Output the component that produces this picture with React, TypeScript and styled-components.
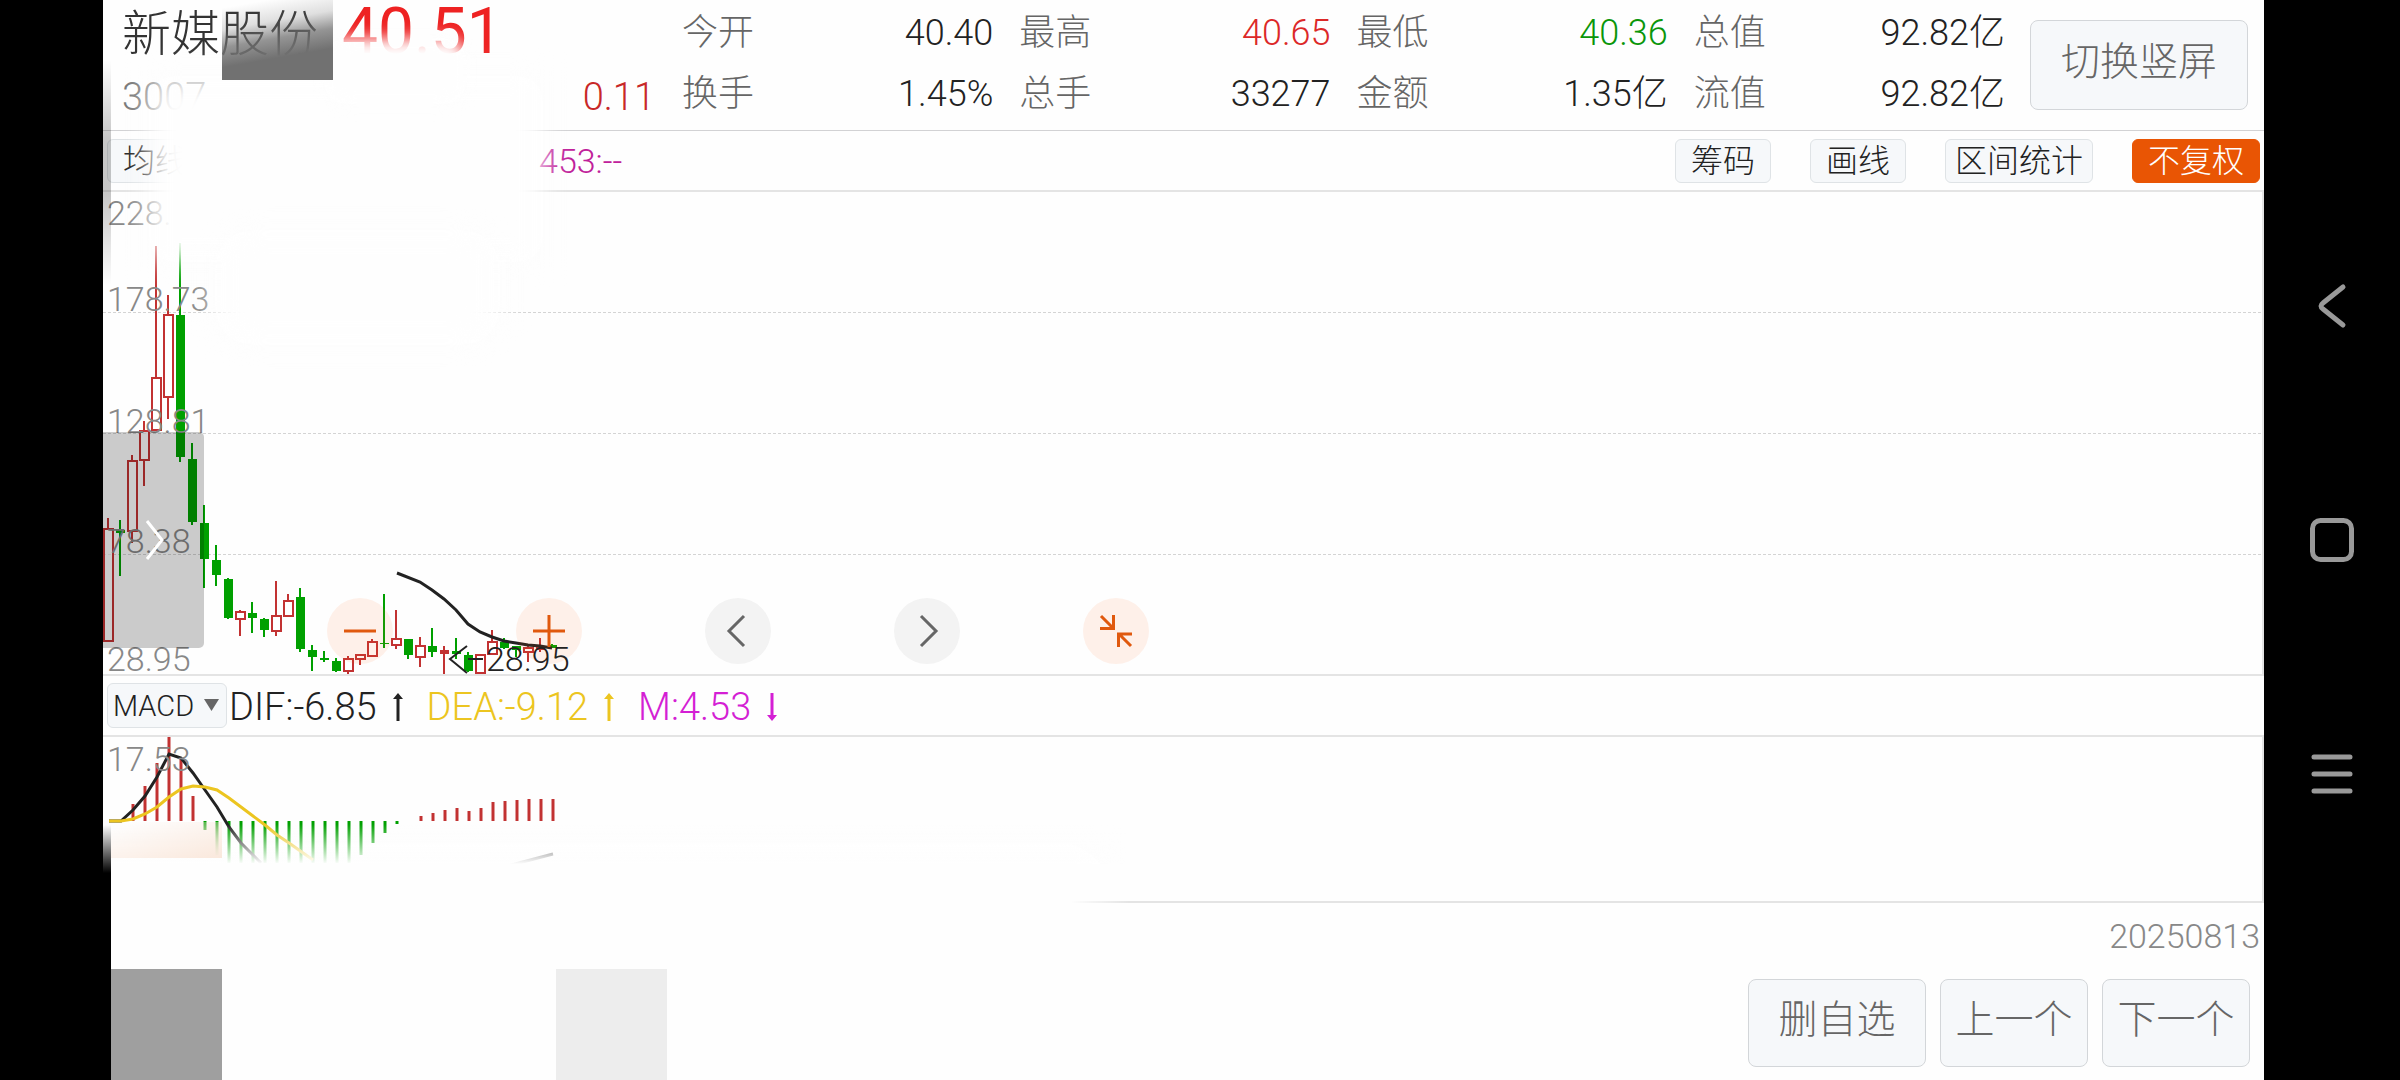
import React from "react";
import styled, { createGlobalStyle, css } from "styled-components";

const Global = createGlobalStyle`
  *, *::before, *::after { box-sizing: border-box; }
  body {
    margin: 0;
    background: #000;
    font-family: Roboto, "Noto Sans CJK SC", sans-serif;
    font-weight: 300;
    color: #222;
  }
  button, select { font: inherit; color: inherit; margin: 0; cursor: pointer; }
`;

const RED = "#c23232";
const GREEN = "#00a000";

const Screen = styled.div`
  display: flex;
  min-height: 100vh;
  background: #000;
`;

const Notch = styled.div`
  flex: 0 0 103px;
`;

const Main = styled.main`
  position: relative;
  flex: 1;
  min-width: 0;
  display: flex;
  flex-direction: column;
  background: #fefefe;
  overflow: hidden;
`;

const Header = styled.header`
  display: flex;
  align-items: flex-start;
  height: 131px;
  padding-right: 16px;
  border-bottom: 1px solid #d2d2d4;
`;

const Quote = styled.div`
  flex: 0 0 579px;
  display: flex;
  flex-direction: column;
  padding: 0 27px 0 19px;
`;

const QuoteTop = styled.div`
  display: flex;
  gap: 24px;
  height: 66px;
`;

const StockName = styled.h1`
  margin: 0;
  font-size: 49px;
  font-weight: 300;
  line-height: 70px;
  white-space: nowrap;
  color: #333;
`;

const Price = styled.strong`
  font-size: 64px;
  font-weight: 400;
  line-height: 64px;
  color: #e22;
`;

const QuoteBottom = styled.div`
  display: flex;
  justify-content: space-between;
  font-size: 38px;
  line-height: 62px;
`;

const Code = styled.span`
  color: #777;
`;

const Change = styled.span`
  color: #c82828;
`;

const Stats = styled.dl`
  flex: 1;
  display: grid;
  grid-template-columns: repeat(4, 1fr);
  column-gap: 26px;
  margin: 0;
  padding-top: 3px;
`;

const Stat = styled.div`
  display: flex;
  justify-content: space-between;
  font-size: 36px;
  line-height: 61px;
`;

const StatLabel = styled.dt`
  color: #666;
`;

const StatValue = styled.dd<{ $color?: string }>`
  margin: 0;
  color: ${(p) => p.$color ?? "#222"};
`;

const BigButton = styled.button<{ $wide?: boolean }>`
  height: 88px;
  padding: 0 0 6px;
  width: ${(p) => (p.$wide ? 178 : 148)}px;
  border: 1px solid #d3d6d9;
  border-radius: 8px;
  background: #f6f8fa;
  color: #666;
  font-size: 39px;
  line-height: 50px;
`;

const SwitchButton = styled(BigButton)`
  width: 218px;
  height: 90px;
  margin: 20px 0 0 25px;
`;

const Toolbar = styled.div`
  display: flex;
  align-items: center;
  justify-content: space-between;
  height: 61px;
  padding: 0 4px;
  border-bottom: 2px solid #e4e4e4;
`;

const ToolGroup = styled.div`
  display: flex;
  align-items: center;
  gap: 39px;
`;

const ChipButton = styled.button<{ $active?: boolean; $tight?: boolean }>`
  height: 44px;
  padding: 0 ${(p) => (p.$tight ? 9 : 15)}px;
  border: 1px solid #dfe3e6;
  border-radius: 6px;
  background: #f6f8fa;
  color: #222;
  font-size: 32px;
  line-height: 40px;
  ${(p) =>
    p.$active &&
    css`
      background: #e95504;
      border-color: #e95504;
      color: #fff;
    `}
`;

const AverageReadout = styled.span`
  margin-left: 336px;
  margin-right: auto;
  font-size: 34px;
  color: #c0209a;
`;

const ChartPanel = styled.section<{ $height: number }>`
  position: relative;
  height: ${(p) => p.$height}px;
  border-right: 2px solid #e4e4e4;
  border-bottom: 2px solid #e4e4e4;
`;

const ChartSvg = styled.svg`
  display: block;
  width: 100%;
  height: 100%;
`;

const AxisLabel = styled.span<{ $top: number; $left?: number; $dark?: boolean }>`
  position: absolute;
  left: ${(p) => p.$left ?? 4}px;
  top: ${(p) => p.$top}px;
  font-size: 34px;
  line-height: 40px;
  color: ${(p) => (p.$dark ? "#222" : "#888")};
`;

const DrawerHandle = styled.button`
  position: absolute;
  left: 0;
  top: 240px;
  width: 101px;
  height: 216px;
  padding: 0;
  border: 0;
  border-radius: 0 5px 5px 0;
  background: rgba(0, 0, 0, 0.2);
  display: grid;
  place-items: center;
`;

const ChartControls = styled.div`
  position: absolute;
  left: 224px;
  top: 406px;
  display: flex;
  gap: 123px;
`;

const RoundButton = styled.button<{ $warm?: boolean }>`
  width: 66px;
  height: 66px;
  padding: 0;
  border: 0;
  border-radius: 50%;
  background: ${(p) => (p.$warm ? "rgba(255, 95, 20, 0.09)" : "#f3f3f3")};
  color: ${(p) => (p.$warm ? "#e0590e" : "#666")};
`;

const IndicatorBar = styled.div`
  display: flex;
  align-items: center;
  height: 61px;
  padding-left: 4px;
  border-bottom: 2px solid #e4e4e4;
  font-size: 38px;
`;

const SelectBox = styled.label`
  position: relative;
  display: block;
  width: 120px;
  margin-right: 2px;
`;

const Select = styled.select`
  appearance: none;
  display: block;
  width: 100%;
  height: 45px;
  padding: 0 0 0 5px;
  border: 1px solid #dfe3e6;
  border-radius: 6px;
  background: #f6f8fa;
  font-size: 29px;
`;

const Caret = styled.svg`
  position: absolute;
  right: 8px;
  top: 16px;
  pointer-events: none;
`;

const Reading = styled.span<{ $color: string }>`
  display: flex;
  align-items: center;
  gap: 15px;
  margin-right: 23px;
  padding-top: 2px;
  color: ${(p) => p.$color};
`;

const DateRow = styled.div`
  padding: 12px 4px 0;
  font-size: 34px;
  line-height: 42px;
  text-align: right;
  color: #888;
`;

const Footer = styled.footer`
  display: flex;
  justify-content: flex-end;
  gap: 14px;
  padding: 22px 14px 12px;
`;

const NavBar = styled.nav`
  flex: 0 0 136px;
  display: flex;
  flex-direction: column;
  align-items: center;
  justify-content: center;
  gap: 174px;
`;

const NavButton = styled.button`
  width: 60px;
  height: 60px;
  padding: 0;
  border: 0;
  background: none;
`;

/* Translucent layers that float above the page content */
const Veil = styled.div`
  position: absolute;
  pointer-events: none;
`;
const MainVeil = styled(Veil)`
  left: 46px;
  top: 76px;
  width: 394px;
  height: 186px;
  background: #fefefe;
  filter: blur(14px);
`;
const PriceVeil = styled(Veil)`
  left: 220px;
  top: 38px;
  width: 144px;
  height: 66px;
  border-radius: 20px;
  background: #fefefe;
  filter: blur(8px);
`;
const GridVeil = styled(Veil)`
  left: 112px;
  top: 230px;
  width: 285px;
  height: 115px;
  border-radius: 30px;
  background: #fefefe;
  filter: blur(14px);
`;
const EdgeShade = styled(Veil)`
  left: 0;
  top: 60px;
  width: 8px;
  height: 225px;
  background: linear-gradient(transparent, rgba(0, 0, 0, 0.22) 35%, rgba(0, 0, 0, 0.22) 60%, transparent);
`;
const EdgeBlack = styled(Veil)`
  left: 0;
  top: 825px;
  bottom: 0;
  width: 8px;
  background: linear-gradient(transparent, #000 48px);
`;
const NameShade = styled(Veil)`
  left: 119px;
  top: 0;
  width: 111px;
  height: 80px;
  background: linear-gradient(
    170deg,
    rgba(113, 113, 113, 0) 8%,
    rgba(113, 113, 113, 0.22) 30%,
    rgba(113, 113, 113, 0.75) 48%,
    #717171 68%
  );
`;
const PeachShade = styled(Veil)`
  left: 8px;
  top: 822px;
  width: 111px;
  height: 36px;
  background: linear-gradient(165deg, rgba(250, 232, 220, 0) 5%, #fae8dc 100%);
`;
const LowerVeil = styled(Veil)`
  left: 8px;
  width: 1019px;
  top: 824px;
  height: 88px;
  background: linear-gradient(rgba(254, 254, 254, 0), #fefefe 40px);
  mask-image: linear-gradient(to right, #000 calc(100% - 60px), transparent);
`;
const GreyBlock = styled(Veil)<{ $left: number; $tone: string }>`
  left: ${(p) => p.$left}px;
  bottom: 0;
  width: 111px;
  height: 111px;
  background: ${(p) => p.$tone};
`;

type Candle = [up: 0 | 1, high: number, top: number, bottom: number, low: number];

const candles: Candle[] = [
  [1, 326, 336, 449, 449],
  [0, 328, 338, 341, 384],
  [1, 263, 268, 339, 351],
  [1, 229, 238, 268, 294],
  [1, 54, 185, 238, 238],
  [1, 103, 122, 205, 227],
  [0, 51, 123, 265, 270],
  [0, 251, 267, 330, 333],
  [0, 313, 331, 367, 396],
  [0, 353, 368, 383, 394],
  [0, 386, 387, 426, 427],
  [1, 418, 419, 427, 444],
  [0, 410, 421, 426, 441],
  [0, 426, 427, 438, 445],
  [1, 389, 423, 439, 444],
  [1, 402, 408, 424, 424],
  [0, 396, 405, 457, 460],
  [0, 453, 458, 465, 479],
  [0, 459, 466, 468, 470],
  [0, 466, 469, 479, 480],
  [1, 464, 466, 479, 482],
  [1, 462, 462, 467, 473],
  [1, 447, 449, 464, 465],
  [0, 402, 451, 452, 456],
  [1, 418, 446, 453, 457],
  [0, 447, 447, 463, 467],
  [1, 445, 453, 465, 475],
  [0, 436, 454, 460, 465],
  [1, 454, 458, 462, 484],
  [0, 446, 459, 462, 467],
  [0, 460, 463, 479, 480],
  [1, 462, 462, 481, 481],
  [1, 438, 449, 462, 462],
  [0, 446, 450, 456, 457],
  [0, 454, 454, 458, 465],
  [1, 454, 455, 460, 470],
  [1, 446, 454, 458, 460],
  [0, 452, 453, 456, 456],
];

const slot = (i: number) => 5 + i * 12;

const averageLine =
  "294,381 317,390 329,398 341,407 353,418 365,432 377,440 389,445 401,449 413,451 425,453 437,454 449,456";

/* Distance of each MACD bar from the zero line, upwards positive */
const macdBars = [
  0, 0, 17, 35, 58, 85, 62, 25, -9, -34, -42, -42, -42, -42, -42, -42, -42, -42, -42, -42, -42, -34, -22, -12, -3, 0,
  5, 8, 11, 13, 10, 13, 19, 20, 21, 22, 22, 22,
];

const difLine = "6,84 18,84 30,73 42,59 54,40 66,17 78,21 90,36 102,53 114,70 126,90 138,106 158,126";
const deaLine =
  "6,84 18,84 30,82 42,77 54,70 66,60 78,52 90,49 102,50 114,53 126,61 138,70 150,79 162,88 174,98 186,106 210,123";

const stats: [string, string, string?][] = [
  ["今开", "40.40"],
  ["最高", "40.65", "#dc2828"],
  ["最低", "40.36", "#0a960a"],
  ["总值", "92.82亿"],
  ["换手", "1.45%"],
  ["总手", "33277"],
  ["金额", "1.35亿"],
  ["流值", "92.82亿"],
];

function CandleShape({ data, index }: { data: Candle; index: number }) {
  const [up, high, top, bottom, low] = data;
  const x = slot(index);
  const color = up ? RED : GREEN;
  const hollow = up && bottom - top > 4;
  return (
    <g stroke={color} strokeWidth={2}>
      {high < top && <line x1={x} x2={x} y1={high} y2={top} />}
      {low > bottom && <line x1={x} x2={x} y1={bottom} y2={low} />}
      {hollow ? (
        <rect x={x - 4} y={top + 1} width={9} height={bottom - top - 1} fill="#fff" fillOpacity={0.6} />
      ) : (
        <rect x={x - 4} y={top} width={9} height={bottom - top} fill={color} stroke="none" />
      )}
    </g>
  );
}

function PriceChart() {
  return (
    <ChartPanel $height={484}>
      <ChartSvg aria-label="K线图">
        {[120, 241, 362].map((y) => (
          <line key={y} x1="0" x2="100%" y1={y + 0.5} y2={y + 0.5} stroke="#d4d4d4" strokeDasharray="3 2" />
        ))}
        {candles.map((c, i) => (
          <CandleShape key={i} data={c} index={i} />
        ))}
        <polyline points={averageLine} fill="none" stroke="#222" strokeWidth="3" />
        <path d="M364 454 L347 467 L364 481 M365 467 H380" fill="none" stroke="#222" strokeWidth="2" />
      </ChartSvg>
      <AxisLabel $top={1}>228.</AxisLabel>
      <AxisLabel $top={87}>178.73</AxisLabel>
      <AxisLabel $top={209}>128.81</AxisLabel>
      <AxisLabel $top={329}>78.38</AxisLabel>
      <AxisLabel $top={447}>28.95</AxisLabel>
      <ChartControls>
        <RoundButton $warm aria-label="缩小">
          <svg width="66" height="66" stroke="currentColor" strokeWidth="3">
            <path d="M17 33 H49" />
          </svg>
        </RoundButton>
        <RoundButton $warm aria-label="放大">
          <svg width="66" height="66" stroke="currentColor" strokeWidth="3">
            <path d="M17 33 H49 M33 17 V49" />
          </svg>
        </RoundButton>
        <RoundButton aria-label="向左">
          <svg width="66" height="66" fill="none" stroke="currentColor" strokeWidth="3">
            <path d="M39 18 L24 33 L39 48" />
          </svg>
        </RoundButton>
        <RoundButton aria-label="向右">
          <svg width="66" height="66" fill="none" stroke="currentColor" strokeWidth="3">
            <path d="M27 18 L42 33 L27 48" />
          </svg>
        </RoundButton>
        <RoundButton $warm aria-label="收起">
          <svg width="66" height="66" fill="none" stroke="currentColor" strokeWidth="3">
            <path d="M18 18 L30 30 M30.500 17 V30.500 H17 M48 48 L36 36 M35.500 49 V36 H49" />
          </svg>
        </RoundButton>
      </ChartControls>
      <AxisLabel $top={447} $left={383} $dark>
        28.95
      </AxisLabel>
      <DrawerHandle aria-label="展开侧栏">
        <svg width="20" height="44" fill="none" stroke="#fff" strokeWidth="3">
          <path d="M3 3 L18 22 L3 41" />
        </svg>
      </DrawerHandle>
    </ChartPanel>
  );
}

function MacdChart() {
  return (
    <ChartPanel $height={166}>
      <ChartSvg aria-label="MACD">
        {macdBars.map((v, i) =>
          v === 0 ? null : (
            <line
              key={i}
              x1={slot(i) + 1}
              x2={slot(i) + 1}
              y1={84}
              y2={84 - v}
              stroke={v > 0 ? RED : GREEN}
              strokeWidth={3}
            />
          ),
        )}
        <polyline points={difLine} fill="none" stroke="#222" strokeWidth="3" />
        <polyline points={deaLine} fill="none" stroke="#ecc520" strokeWidth="3" />
        <polyline points="382,135 450,117" fill="none" stroke="#222" strokeWidth="3" />
        <polyline points="412,138 450,128" fill="none" stroke="#f6de80" strokeWidth="3" />
      </ChartSvg>
      <AxisLabel $top={2}>17.53</AxisLabel>
    </ChartPanel>
  );
}

function Trend({ down }: { down?: boolean }) {
  return (
    <svg width="12" height="28" fill="currentColor">
      <g transform={down ? "rotate(180 6 14)" : undefined}>
        <path d="M6 0 L11 6 L7.500 6 V28 H4.500 V6 L1 6 Z" />
      </g>
    </svg>
  );
}

export default function App() {
  return (
    <Screen>
      <Global />
      <Notch />
      <Main>
        <Header>
          <Quote>
            <QuoteTop>
              <StockName>新媒股份</StockName>
              <Price>40.51</Price>
            </QuoteTop>
            <QuoteBottom>
              <Code>3007</Code>
              <Change>0.11</Change>
            </QuoteBottom>
          </Quote>
          <Stats>
            {stats.map(([label, value, color]) => (
              <Stat key={label}>
                <StatLabel>{label}</StatLabel>
                <StatValue $color={color}>{value}</StatValue>
              </Stat>
            ))}
          </Stats>
          <SwitchButton>切换竖屏</SwitchButton>
        </Header>

        <Toolbar>
          <ChipButton>均线</ChipButton>
          <AverageReadout>453:--</AverageReadout>
          <ToolGroup>
            <ChipButton>筹码</ChipButton>
            <ChipButton>画线</ChipButton>
            <ChipButton $tight>区间统计</ChipButton>
            <ChipButton $active>不复权</ChipButton>
          </ToolGroup>
        </Toolbar>

        <PriceChart />

        <IndicatorBar>
          <SelectBox>
            <Select aria-label="指标" defaultValue="MACD">
              <option>MACD</option>
            </Select>
            <Caret width="15" height="12" fill="#666">
              <path d="M0 0 H15 L7.500 12 Z" />
            </Caret>
          </SelectBox>
          <Reading $color="#222">
            DIF:-6.85
            <Trend />
          </Reading>
          <Reading $color="#ecc520">
            DEA:-9.12
            <Trend />
          </Reading>
          <Reading $color="#d41fd4">
            M:4.53
            <Trend down />
          </Reading>
        </IndicatorBar>

        <MacdChart />

        <DateRow>20250813</DateRow>
        <Footer>
          <BigButton $wide>删自选</BigButton>
          <BigButton>上一个</BigButton>
          <BigButton>下一个</BigButton>
        </Footer>

        <MainVeil />
        <PriceVeil />
        <GridVeil />
        <LowerVeil />
        <EdgeShade />
        <EdgeBlack />
        <NameShade />
        <PeachShade />
        <GreyBlock $left={8} $tone="#9f9f9f" />
        <GreyBlock $left={453} $tone="#ededed" />
      </Main>
      <NavBar>
        <NavButton aria-label="返回">
          <svg width="60" height="60" fill="none" stroke="#999" strokeWidth="5" strokeLinecap="round" strokeLinejoin="round">
            <path d="M41 11 L21 27 Q17 30 21 33 L41 49" />
          </svg>
        </NavButton>
        <NavButton aria-label="主页">
          <svg width="60" height="60" fill="none" stroke="#999" strokeWidth="5">
            <rect x="10.500" y="10.500" width="39" height="39" rx="8" />
          </svg>
        </NavButton>
        <NavButton aria-label="菜单">
          <svg width="60" height="60" fill="none" stroke="#999" strokeWidth="5" strokeLinecap="round">
            <path d="M12 13 H48 M12 30 H48 M12 47 H48" />
          </svg>
        </NavButton>
      </NavBar>
    </Screen>
  );
}
